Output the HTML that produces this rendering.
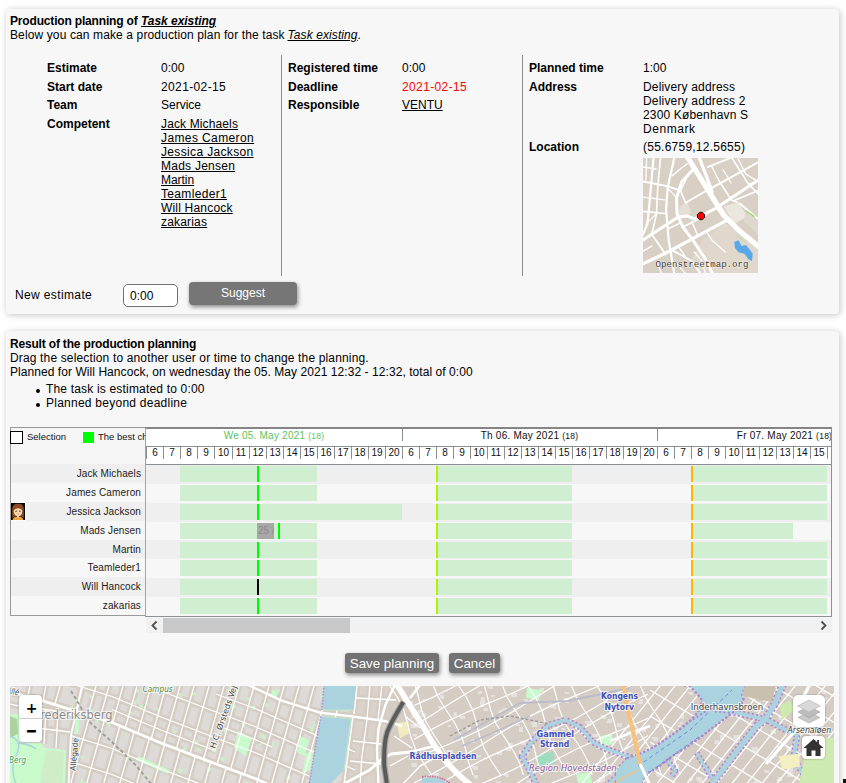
<!DOCTYPE html>
<html><head><meta charset="utf-8"><title>Production planning</title>
<style>
html,body{margin:0;padding:0;background:#fff;width:846px;height:783px;overflow:hidden;}
body{width:846px;height:783px;overflow:hidden;position:relative;font-family:"Liberation Sans",Arial,sans-serif;font-size:12px;line-height:14px;color:#000;}
.panel{position:absolute;background:#f7f7f7;border-radius:4px;box-shadow:1px 1px 7px rgba(0,0,0,.24);}
.t{position:absolute;white-space:nowrap;}
.b{font-weight:bold;}
a{color:#000;text-decoration:underline;}
.vl{position:absolute;width:1px;background:#8c8c8c;}
.btn{position:absolute;background:#727272;color:#fff;border-radius:4px;box-shadow:1px 2px 4px rgba(0,0,0,.45);text-align:center;white-space:nowrap;}
.g{position:absolute;}
.lbl{position:absolute;left:11px;width:130px;text-align:right;font-size:10px;letter-spacing:.12px;line-height:19px;height:19px;color:#1a1a1a;white-space:nowrap;}
.hr{position:absolute;font-size:10px;line-height:12px;text-align:center;color:#111;}
.sep{position:absolute;width:1px;background:#8a8f94;}
.bar{position:absolute;height:16px;background:#d0eed0;}
.now{position:absolute;width:2px;height:16px;}
#root{position:absolute;left:0;top:0;width:846px;height:783px;overflow:hidden;}
</style></head><body><div id="root">

<div class="panel" style="left:6px;top:9px;width:833px;height:305px;"></div>
<div class="t b" style="left:10px;top:14px;letter-spacing:-0.17px;">Production planning of</div>
<div class="t b" style="left:141px;top:14px;letter-spacing:-0.04px;"><a href="#"><i>Task existing</i></a></div>
<div class="t" style="left:10px;top:28px;letter-spacing:0.12px;">Below you can make a production plan for the task</div>
<div class="t" style="left:287.5px;top:28px;letter-spacing:0.09px;"><a href="#"><i>Task existing</i></a>.</div>
<div class="t b" style="left:47px;top:61px;">Estimate</div>
<div class="t b" style="left:47px;top:80px;">Start date</div>
<div class="t b" style="left:47px;top:98px;">Team</div>
<div class="t b" style="left:47px;top:117px;">Competent</div>
<div class="t" style="left:161px;top:61px;">0:00</div>
<div class="t" style="left:161px;top:80px;letter-spacing:0.37px;">2021-02-15</div>
<div class="t" style="left:161px;top:98px;">Service</div>
<div class="t" style="left:161px;top:117px;letter-spacing:0.13px;"><a href="#">Jack Michaels</a></div>
<div class="t" style="left:161px;top:131px;letter-spacing:0.39px;"><a href="#">James Cameron</a></div>
<div class="t" style="left:161px;top:145px;letter-spacing:0.35px;"><a href="#">Jessica Jackson</a></div>
<div class="t" style="left:161px;top:159px;letter-spacing:0.25px;"><a href="#">Mads Jensen</a></div>
<div class="t" style="left:161px;top:173px;letter-spacing:-0.04px;"><a href="#">Martin</a></div>
<div class="t" style="left:161px;top:187px;letter-spacing:0.34px;"><a href="#">Teamleder1</a></div>
<div class="t" style="left:161px;top:201px;letter-spacing:0.19px;"><a href="#">Will Hancock</a></div>
<div class="t" style="left:161px;top:215px;letter-spacing:0.18px;"><a href="#">zakarias</a></div>
<div class="vl" style="left:281px;top:55px;height:221px;"></div>
<div class="t b" style="left:288px;top:61px;">Registered time</div>
<div class="t b" style="left:288px;top:80px;">Deadline</div>
<div class="t b" style="left:288px;top:98px;">Responsible</div>
<div class="t" style="left:402px;top:61px;">0:00</div>
<div class="t" style="left:402px;top:80px;letter-spacing:0.37px;color:#ff0000;">2021-02-15</div>
<div class="t" style="left:402px;top:98px;"><a href="#">VENTU</a></div>
<div class="vl" style="left:522px;top:55px;height:221px;"></div>
<div class="t b" style="left:529px;top:61px;">Planned time</div>
<div class="t b" style="left:529px;top:80px;">Address</div>
<div class="t b" style="left:529px;top:140px;">Location</div>
<div class="t" style="left:643px;top:61px;">1:00</div>
<div class="t" style="left:643px;top:80px;letter-spacing:0.17px;">Delivery address</div>
<div class="t" style="left:643px;top:94px;letter-spacing:0.18px;">Delivery address 2</div>
<div class="t" style="left:643px;top:108px;letter-spacing:0.15px;">2300 København S</div>
<div class="t" style="left:643px;top:122px;letter-spacing:0.56px;">Denmark</div>
<div class="t" style="left:643px;top:140px;letter-spacing:0.24px;">(55.6759,12.5655)</div>
<svg class="g" style="left:643px;top:158px;" width="115" height="115" viewBox="0 0 115 115">
<clipPath id="mm"><rect width="115" height="115"/></clipPath><g clip-path="url(#mm)">
<rect width="115" height="115" fill="#d9d0c5"/>
<path d="M58.7 82.2 L82.2 64.6 L117.5 94.0 L117.5 117.5 L55.8 117.5 L48.5 102.8Z" fill="#e0d8cd"/>
<path d="M80.8 48.5 L95.5 44.1 L104.3 58.7 L91.1 66.1Z" fill="#ebe6de"/>
<path d="M36.7 48.5 L44.1 44.1 L48.5 54.3 L44.1 58.7 L35.2 58.7Z" fill="#e6dfd6"/>
<path d="M102.8 51.4 L115.0 64.6 L115.0 76.4 L101.3 63.2Z" fill="#dfd8ce"/>
<path d="M44.1 -1.5 L58.7 22.0 L73.4 45.5 L82.2 58.7 L95.5 72.0 L117.5 90.3" fill="none" stroke="#fff" stroke-width="5.2" stroke-linejoin="round" stroke-linecap="round"/>
<path d="M55.8 -1.5 L63.2 17.6 L69.0 33.8" fill="none" stroke="#fff" stroke-width="3.2" stroke-linejoin="round" stroke-linecap="round"/>
<path d="M51.4 10.3 L38.9 23.5 L33.5 39.7 L34.1 55.8 L39.9 69.0 L49.9 82.2 L61.7 99.9 L70.5 117.5" fill="none" stroke="#fff" stroke-width="3.0" stroke-linejoin="round" stroke-linecap="round"/>
<path d="M-1.5 83.0 L17.6 70.5 L35.2 59.0 L44.1 58.0 L51.4 60.9 L58.0 58.0 L73.4 49.9 L82.2 44.1 L117.5 20.6" fill="none" stroke="#fff" stroke-width="3.0" stroke-linejoin="round" stroke-linecap="round"/>
<path d="M-1.5 106.5 L22.0 95.5 L47.0 82.2 L63.2 73.4 L82.2 63.2" fill="none" stroke="#fff" stroke-width="3.2" stroke-linejoin="round" stroke-linecap="round"/>
<path d="M31.6 -1.5 L24.7 29.4 L23.1 51.4 L25.7 82.2 L31.6 117.5" fill="none" stroke="#fff" stroke-width="2.2" stroke-linejoin="round" stroke-linecap="round"/>
<path d="M10.6 -1.5 L6.6 44.1 L4.4 66.1 L-1.5 79.3" fill="none" stroke="#fff" stroke-width="2.2" stroke-linejoin="round" stroke-linecap="round"/>
<path d="M17.6 -1.5 L14.7 29.4 L13.5 55.8 L8.8 76.4" fill="none" stroke="#fff" stroke-width="1.6" stroke-linejoin="round" stroke-linecap="round"/>
<path d="M-1.5 23.2 L23.5 27.9 L37.5 32.6" fill="none" stroke="#fff" stroke-width="2.0" stroke-linejoin="round" stroke-linecap="round"/>
<path d="M-1.5 53.2 L22.0 55.5" fill="none" stroke="#fff" stroke-width="1.6" stroke-linejoin="round" stroke-linecap="round"/>
<path d="M-1.5 8.8 L13.2 11.0" fill="none" stroke="#fff" stroke-width="1.4" stroke-linejoin="round" stroke-linecap="round"/>
<path d="M64.6 9.1 L91.1 -1.5" fill="none" stroke="#fff" stroke-width="1.8" stroke-linejoin="round" stroke-linecap="round"/>
<path d="M68.3 30.1 L117.5 2.9" fill="none" stroke="#fff" stroke-width="2.0" stroke-linejoin="round" stroke-linecap="round"/>
<path d="M76.4 23.5 L88.9 42.6 L94.0 44.1" fill="none" stroke="#fff" stroke-width="1.6" stroke-linejoin="round" stroke-linecap="round"/>
<path d="M88.1 -1.5 L105.7 26.4 L117.5 38.2" fill="none" stroke="#fff" stroke-width="1.6" stroke-linejoin="round" stroke-linecap="round"/>
<path d="M91.1 42.6 L117.5 31.6" fill="none" stroke="#fff" stroke-width="1.6" stroke-linejoin="round" stroke-linecap="round"/>
<path d="M102.8 16.2 L117.5 25.0" fill="none" stroke="#fff" stroke-width="1.4" stroke-linejoin="round" stroke-linecap="round"/>
<path d="M96.9 45.5 L117.5 63.2" fill="none" stroke="#fff" stroke-width="2.0" stroke-linejoin="round" stroke-linecap="round"/>
<path d="M42.6 44.8 L61.7 33.8 L69.0 30.1" fill="none" stroke="#fff" stroke-width="1.8" stroke-linejoin="round" stroke-linecap="round"/>
<path d="M37.5 32.6 L42.6 44.8" fill="none" stroke="#fff" stroke-width="1.6" stroke-linejoin="round" stroke-linecap="round"/>
<path d="M44.1 19.1 L37.5 32.6" fill="none" stroke="#fff" stroke-width="1.4" stroke-linejoin="round" stroke-linecap="round"/>
<path d="M39.7 69.0 L63.2 57.3" fill="none" stroke="#fff" stroke-width="1.4" stroke-linejoin="round" stroke-linecap="round"/>
<path d="M48.5 63.2 L54.3 76.4" fill="none" stroke="#fff" stroke-width="1.4" stroke-linejoin="round" stroke-linecap="round"/>
<path d="M25.7 70.5 L38.2 64.6" fill="none" stroke="#fff" stroke-width="1.4" stroke-linejoin="round" stroke-linecap="round"/>
<path d="M8.8 76.4 L22.0 95.5" fill="none" stroke="#fff" stroke-width="1.6" stroke-linejoin="round" stroke-linecap="round"/>
<path d="M27.2 91.1 L48.5 102.8 L58.7 117.5" fill="none" stroke="#fff" stroke-width="1.8" stroke-linejoin="round" stroke-linecap="round"/>
<path d="M-1.5 94.0 L8.8 88.1" fill="none" stroke="#fff" stroke-width="1.4" stroke-linejoin="round" stroke-linecap="round"/>
<path d="M14.7 105.7 L19.1 117.5" fill="none" stroke="#fff" stroke-width="1.4" stroke-linejoin="round" stroke-linecap="round"/>
<path d="M35.2 88.1 L44.1 101.3" fill="none" stroke="#fff" stroke-width="1.4" stroke-linejoin="round" stroke-linecap="round"/>
<path d="M29.4 17.6 L38.2 10.3 L44.1 5.9" fill="none" stroke="#fff" stroke-width="1.4" stroke-linejoin="round" stroke-linecap="round"/>
<path d="M63.2 73.4 L69.0 82.2 L82.2 94.0" fill="none" stroke="#fff" stroke-width="1.2" stroke-linejoin="round" stroke-linecap="round"/>
<path d="M3.7 -1.5 L2.9 22.0" fill="none" stroke="#fff" stroke-width="1.3" stroke-linejoin="round" stroke-linecap="round"/>
<path d="M-1.5 38.9 L6.6 39.9 L22.0 41.9" fill="none" stroke="#fff" stroke-width="1.3" stroke-linejoin="round" stroke-linecap="round"/>
<path d="M24.2 29.4 L33.5 39.7" fill="none" stroke="#fff" stroke-width="1.2" stroke-linejoin="round" stroke-linecap="round"/>
<path d="M69.0 8.8 L76.4 23.5" fill="none" stroke="#fff" stroke-width="1.3" stroke-linejoin="round" stroke-linecap="round"/>
<path d="M94.0 -1.5 L102.8 16.2" fill="none" stroke="#fff" stroke-width="1.3" stroke-linejoin="round" stroke-linecap="round"/>
<path d="M105.7 26.4 L117.5 22.0" fill="none" stroke="#fff" stroke-width="1.3" stroke-linejoin="round" stroke-linecap="round"/>
<path d="M80.0 11.7 L88.1 25.0" fill="none" stroke="#fff" stroke-width="1.2" stroke-linejoin="round" stroke-linecap="round"/>
<path d="M2.9 66.1 L13.2 55.8" fill="none" stroke="#fff" stroke-width="1.2" stroke-linejoin="round" stroke-linecap="round"/>
<path d="M13.2 82.2 L19.1 91.1" fill="none" stroke="#fff" stroke-width="1.2" stroke-linejoin="round" stroke-linecap="round"/>
<path d="M73.4 49.9 L79.3 58.7" fill="none" stroke="#fff" stroke-width="1.2" stroke-linejoin="round" stroke-linecap="round"/>
<path d="M51.4 94.0 L58.7 102.8 L63.2 117.5" fill="none" stroke="#fff" stroke-width="1.3" stroke-linejoin="round" stroke-linecap="round"/>
<path d="M33.8 105.7 L44.1 117.5" fill="none" stroke="#fff" stroke-width="1.2" stroke-linejoin="round" stroke-linecap="round"/>
<path d="M91.3 84.0 L95.5 82.2 L98.7 88.1 L103.1 86.9 L109.7 95.5 L109.0 103.1 L105.7 101.6 L101.3 95.8 L95.5 94.3 L91.9 89.9Z" fill="#5aa7e8"/>
<path d="M94.0 77.8 L102.8 84.4" stroke="#b7e0a0" stroke-width="1" fill="none"/>
<path d="M102.8 52.9 L111.6 58.7" stroke="#a8d878" stroke-width="1.6" fill="none"/>
</g>
<text x="12.5" y="109.4" font-family="'Liberation Mono',monospace" font-size="9.1" fill="#3a3a3a" textLength="93" stroke="#fff" stroke-width="1.2" stroke-opacity=".6" paint-order="stroke">Openstreetmap.org</text>
<path d="M56.5 54.4H59.5L61.6 56.5V59.5L59.5 61.6H56.5L54.4 59.5V56.5Z" fill="#ff0000" stroke="#000" stroke-width=".9"/>
</svg>
<div class="t" style="left:15px;top:288px;letter-spacing:0.37px;">New estimate</div>
<div style="position:absolute;left:123px;top:284px;width:53px;height:21px;border:1px solid #707070;border-radius:5px;background:#fff;"></div>
<div class="t" style="left:130px;top:289px;">0:00</div>
<div class="btn" style="left:189px;top:282px;width:108px;height:22.5px;line-height:23px;font-size:12px;background:#767676;">Suggest</div>
<div class="panel" style="left:6px;top:331px;width:833px;height:470px;"></div>
<div class="t b" style="left:10px;top:337px;letter-spacing:-0.18px;">Result of the production planning</div>
<div class="t" style="left:10px;top:351px;letter-spacing:0.15px;">Drag the selection to another user or time to change the planning.</div>
<div class="t" style="left:10px;top:365px;letter-spacing:0.06px;">Planned for Will Hancock, on wednesday the 05. May 2021 12:32 - 12:32, total of 0:00</div>
<div style="position:absolute;left:36px;top:389px;width:4px;height:4px;border-radius:2px;background:#000;"></div>
<div style="position:absolute;left:36px;top:403px;width:4px;height:4px;border-radius:2px;background:#000;"></div>
<div class="t" style="left:46px;top:382px;letter-spacing:0.18px;">The task is estimated to 0:00</div>
<div class="t" style="left:46px;top:396px;letter-spacing:0.25px;">Planned beyond deadline</div>
<div class="g" style="left:10px;top:427px;width:136px;height:189px;border:1px solid #999;border-right:none;box-sizing:border-box;background:#f6f6f6;"></div>
<div class="g" style="left:145px;top:427px;width:687px;height:190px;box-sizing:border-box;border:1px solid #8c9196;border-left-color:#a4a4a4;border-top:2px solid #858585;background:#fff;"></div>
<div class="g" style="left:11px;top:464px;width:134px;height:19px;background:#efefef;"></div>
<div class="g" style="left:146px;top:465px;width:685px;height:19px;background:#efefef;"></div>
<div class="lbl" style="top:464px;">Jack Michaels</div>
<div class="g" style="left:11px;top:483px;width:134px;height:19px;background:#f7f7f7;"></div>
<div class="g" style="left:146px;top:484px;width:685px;height:19px;background:#f7f7f7;"></div>
<div class="lbl" style="top:483px;">James Cameron</div>
<div class="g" style="left:11px;top:502px;width:134px;height:19px;background:#efefef;"></div>
<div class="g" style="left:146px;top:503px;width:685px;height:19px;background:#efefef;"></div>
<div class="lbl" style="top:502px;">Jessica Jackson</div>
<div class="g" style="left:11px;top:521px;width:134px;height:19px;background:#f7f7f7;"></div>
<div class="g" style="left:146px;top:522px;width:685px;height:18px;background:#f7f7f7;"></div>
<div class="lbl" style="top:521px;">Mads Jensen</div>
<div class="g" style="left:11px;top:540px;width:134px;height:18px;background:#efefef;"></div>
<div class="g" style="left:146px;top:540px;width:685px;height:19px;background:#efefef;"></div>
<div class="lbl" style="top:540px;">Martin</div>
<div class="g" style="left:11px;top:558px;width:134px;height:19px;background:#f7f7f7;"></div>
<div class="g" style="left:146px;top:559px;width:685px;height:19px;background:#f7f7f7;"></div>
<div class="lbl" style="top:558px;">Teamleder1</div>
<div class="g" style="left:11px;top:577px;width:134px;height:19px;background:#efefef;"></div>
<div class="g" style="left:146px;top:578px;width:685px;height:19px;background:#efefef;"></div>
<div class="lbl" style="top:577px;">Will Hancock</div>
<div class="g" style="left:11px;top:596px;width:134px;height:19px;background:#f7f7f7;"></div>
<div class="g" style="left:146px;top:597px;width:685px;height:19px;background:#f7f7f7;"></div>
<div class="lbl" style="top:596px;">zakarias</div>
<div class="g" style="left:10px;top:431px;width:11px;height:11px;border:1px solid #000;background:#fff;"></div>
<div class="t" style="left:27px;top:431px;font-size:9.5px;line-height:12px;color:#111;">Selection</div>
<div class="g" style="left:83px;top:432px;width:11px;height:11px;background:#00ff00;"></div>
<div class="t" style="left:98px;top:431px;font-size:9.5px;line-height:12px;color:#111;width:47px;overflow:hidden;">The best choice</div>
<div class="g" style="left:146px;top:446px;width:685px;height:1px;background:#8a8f94;"></div>
<div class="g" style="left:146px;top:464px;width:685px;height:1px;background:#8a8f94;"></div>
<div class="g" style="left:146px;top:429px;width:685px;height:188px;overflow:hidden;">
<div class="hr" style="left:0px;top:0px;width:256px;color:#5cc45c;line-height:13px;letter-spacing:.23px;">We 05. May 2021 <span style="font-size:8.5px;">(18)</span></div>
<div class="sep" style="left:0px;top:18px;height:12px;"></div>
<div class="hr" style="left:1px;top:18px;width:16px;">6</div>
<div class="sep" style="left:17px;top:18px;height:12px;"></div>
<div class="hr" style="left:18px;top:18px;width:16px;">7</div>
<div class="sep" style="left:34px;top:18px;height:12px;"></div>
<div class="hr" style="left:35px;top:18px;width:16px;">8</div>
<div class="sep" style="left:51px;top:18px;height:12px;"></div>
<div class="hr" style="left:52px;top:18px;width:16px;">9</div>
<div class="sep" style="left:68px;top:18px;height:12px;"></div>
<div class="hr" style="left:69px;top:18px;width:17px;">10</div>
<div class="sep" style="left:86px;top:18px;height:12px;"></div>
<div class="hr" style="left:87px;top:18px;width:16px;">11</div>
<div class="sep" style="left:103px;top:18px;height:12px;"></div>
<div class="hr" style="left:104px;top:18px;width:16px;">12</div>
<div class="sep" style="left:120px;top:18px;height:12px;"></div>
<div class="hr" style="left:121px;top:18px;width:16px;">13</div>
<div class="sep" style="left:137px;top:18px;height:12px;"></div>
<div class="hr" style="left:138px;top:18px;width:16px;">14</div>
<div class="sep" style="left:154px;top:18px;height:12px;"></div>
<div class="hr" style="left:155px;top:18px;width:16px;">15</div>
<div class="sep" style="left:171px;top:18px;height:12px;"></div>
<div class="hr" style="left:172px;top:18px;width:16px;">16</div>
<div class="sep" style="left:188px;top:18px;height:12px;"></div>
<div class="hr" style="left:189px;top:18px;width:16px;">17</div>
<div class="sep" style="left:205px;top:18px;height:12px;"></div>
<div class="hr" style="left:206px;top:18px;width:16px;">18</div>
<div class="sep" style="left:222px;top:18px;height:12px;"></div>
<div class="hr" style="left:223px;top:18px;width:16px;">19</div>
<div class="sep" style="left:239px;top:18px;height:12px;"></div>
<div class="hr" style="left:240px;top:18px;width:16px;">20</div>
<div class="sep" style="left:256px;top:0px;height:12px;"></div>
<div class="hr" style="left:256px;top:0px;width:255px;color:#111;line-height:13px;letter-spacing:.23px;">Th 06. May 2021 <span style="font-size:8.5px;">(18)</span></div>
<div class="sep" style="left:256px;top:18px;height:12px;"></div>
<div class="hr" style="left:257px;top:18px;width:16px;">6</div>
<div class="sep" style="left:273px;top:18px;height:12px;"></div>
<div class="hr" style="left:274px;top:18px;width:16px;">7</div>
<div class="sep" style="left:290px;top:18px;height:12px;"></div>
<div class="hr" style="left:291px;top:18px;width:16px;">8</div>
<div class="sep" style="left:307px;top:18px;height:12px;"></div>
<div class="hr" style="left:308px;top:18px;width:16px;">9</div>
<div class="sep" style="left:324px;top:18px;height:12px;"></div>
<div class="hr" style="left:325px;top:18px;width:16px;">10</div>
<div class="sep" style="left:341px;top:18px;height:12px;"></div>
<div class="hr" style="left:342px;top:18px;width:16px;">11</div>
<div class="sep" style="left:358px;top:18px;height:12px;"></div>
<div class="hr" style="left:359px;top:18px;width:16px;">12</div>
<div class="sep" style="left:375px;top:18px;height:12px;"></div>
<div class="hr" style="left:376px;top:18px;width:16px;">13</div>
<div class="sep" style="left:392px;top:18px;height:12px;"></div>
<div class="hr" style="left:393px;top:18px;width:16px;">14</div>
<div class="sep" style="left:409px;top:18px;height:12px;"></div>
<div class="hr" style="left:410px;top:18px;width:16px;">15</div>
<div class="sep" style="left:426px;top:18px;height:12px;"></div>
<div class="hr" style="left:427px;top:18px;width:16px;">16</div>
<div class="sep" style="left:443px;top:18px;height:12px;"></div>
<div class="hr" style="left:444px;top:18px;width:16px;">17</div>
<div class="sep" style="left:460px;top:18px;height:12px;"></div>
<div class="hr" style="left:461px;top:18px;width:16px;">18</div>
<div class="sep" style="left:477px;top:18px;height:12px;"></div>
<div class="hr" style="left:478px;top:18px;width:16px;">19</div>
<div class="sep" style="left:494px;top:18px;height:12px;"></div>
<div class="hr" style="left:495px;top:18px;width:16px;">20</div>
<div class="sep" style="left:511px;top:0px;height:12px;"></div>
<div class="hr" style="left:511px;top:0px;width:255px;color:#111;line-height:13px;letter-spacing:.23px;">Fr 07. May 2021 <span style="font-size:8.5px;">(18)</span></div>
<div class="sep" style="left:511px;top:18px;height:12px;"></div>
<div class="hr" style="left:512px;top:18px;width:16px;">6</div>
<div class="sep" style="left:528px;top:18px;height:12px;"></div>
<div class="hr" style="left:529px;top:18px;width:16px;">7</div>
<div class="sep" style="left:545px;top:18px;height:12px;"></div>
<div class="hr" style="left:546px;top:18px;width:16px;">8</div>
<div class="sep" style="left:562px;top:18px;height:12px;"></div>
<div class="hr" style="left:563px;top:18px;width:16px;">9</div>
<div class="sep" style="left:579px;top:18px;height:12px;"></div>
<div class="hr" style="left:580px;top:18px;width:16px;">10</div>
<div class="sep" style="left:596px;top:18px;height:12px;"></div>
<div class="hr" style="left:597px;top:18px;width:16px;">11</div>
<div class="sep" style="left:613px;top:18px;height:12px;"></div>
<div class="hr" style="left:614px;top:18px;width:16px;">12</div>
<div class="sep" style="left:630px;top:18px;height:12px;"></div>
<div class="hr" style="left:631px;top:18px;width:16px;">13</div>
<div class="sep" style="left:647px;top:18px;height:12px;"></div>
<div class="hr" style="left:648px;top:18px;width:16px;">14</div>
<div class="sep" style="left:664px;top:18px;height:12px;"></div>
<div class="hr" style="left:665px;top:18px;width:16px;">15</div>
<div class="sep" style="left:681px;top:18px;height:12px;"></div>
<div class="hr" style="left:682px;top:18px;width:16px;">16</div>
<div class="sep" style="left:698px;top:18px;height:12px;"></div>
<div class="hr" style="left:699px;top:18px;width:16px;">17</div>
<div class="sep" style="left:715px;top:18px;height:12px;"></div>
<div class="hr" style="left:716px;top:18px;width:16px;">18</div>
<div class="sep" style="left:732px;top:18px;height:12px;"></div>
<div class="hr" style="left:733px;top:18px;width:16px;">19</div>
<div class="sep" style="left:749px;top:18px;height:12px;"></div>
<div class="hr" style="left:750px;top:18px;width:16px;">20</div>
<div class="bar" style="left:34px;top:37px;width:137px;"></div>
<div class="bar" style="left:290px;top:37px;width:136px;"></div>
<div class="bar" style="left:545px;top:37px;width:136px;"></div>
<div class="now" style="left:111px;top:37px;background:#00f800;"></div>
<div class="now" style="left:290px;top:37px;background:#b4f000;"></div>
<div class="now" style="left:545px;top:37px;background:#ffb400;"></div>
<div class="bar" style="left:34px;top:56px;width:137px;"></div>
<div class="bar" style="left:290px;top:56px;width:136px;"></div>
<div class="bar" style="left:545px;top:56px;width:136px;"></div>
<div class="now" style="left:111px;top:56px;background:#00f800;"></div>
<div class="now" style="left:290px;top:56px;background:#b4f000;"></div>
<div class="now" style="left:545px;top:56px;background:#ffb400;"></div>
<div class="bar" style="left:34px;top:75px;width:222px;"></div>
<div class="bar" style="left:290px;top:75px;width:136px;"></div>
<div class="bar" style="left:545px;top:75px;width:136px;"></div>
<div class="now" style="left:111px;top:75px;background:#00f800;"></div>
<div class="now" style="left:290px;top:75px;background:#b4f000;"></div>
<div class="now" style="left:545px;top:75px;background:#ffb400;"></div>
<div class="bar" style="left:34px;top:94px;width:137px;"></div>
<div class="bar" style="left:290px;top:94px;width:136px;"></div>
<div class="bar" style="left:545px;top:94px;width:102px;"></div>
<div class="g" style="left:111px;top:94px;width:17px;height:16px;background:#a8a8a8;color:#8a8a8a;font-size:10px;line-height:16px;overflow:hidden;white-space:nowrap;"><span style="margin-left:1px;">25 / 25</span></div>
<div class="now" style="left:132px;top:94px;background:#00f800;"></div>
<div class="now" style="left:290px;top:94px;background:#b4f000;"></div>
<div class="now" style="left:545px;top:94px;background:#ffb400;"></div>
<div class="bar" style="left:34px;top:113px;width:137px;"></div>
<div class="bar" style="left:290px;top:113px;width:136px;"></div>
<div class="bar" style="left:545px;top:113px;width:136px;"></div>
<div class="now" style="left:111px;top:113px;background:#00f800;"></div>
<div class="now" style="left:290px;top:113px;background:#b4f000;"></div>
<div class="now" style="left:545px;top:113px;background:#ffb400;"></div>
<div class="bar" style="left:34px;top:131px;width:137px;"></div>
<div class="bar" style="left:290px;top:131px;width:136px;"></div>
<div class="bar" style="left:545px;top:131px;width:136px;"></div>
<div class="now" style="left:111px;top:131px;background:#00f800;"></div>
<div class="now" style="left:290px;top:131px;background:#b4f000;"></div>
<div class="now" style="left:545px;top:131px;background:#ffb400;"></div>
<div class="bar" style="left:34px;top:150px;width:137px;"></div>
<div class="bar" style="left:290px;top:150px;width:136px;"></div>
<div class="bar" style="left:545px;top:150px;width:136px;"></div>
<div class="now" style="left:111px;top:150px;background:#000;"></div>
<div class="now" style="left:290px;top:150px;background:#b4f000;"></div>
<div class="now" style="left:545px;top:150px;background:#ffb400;"></div>
<div class="bar" style="left:34px;top:169px;width:137px;"></div>
<div class="bar" style="left:290px;top:169px;width:136px;"></div>
<div class="bar" style="left:545px;top:169px;width:136px;"></div>
<div class="now" style="left:111px;top:169px;background:#00f800;"></div>
<div class="now" style="left:290px;top:169px;background:#b4f000;"></div>
<div class="now" style="left:545px;top:169px;background:#ffb400;"></div>
</div>
<svg class="g" style="left:10px;top:502px;" width="16" height="19" viewBox="-1 -1 16 19"><rect x="0" y="-1" width="15" height="19" fill="#fbfbfb"/><rect width="14" height="17" fill="#050505"/><path d="M1.200 15V6Q1.200 0.800 7 0.800T12.800 6V15L10.500 13.500H3.500Z" fill="#8b4a22"/><ellipse cx="7" cy="8.600" rx="4.300" ry="4.700" fill="#f6d6ac"/><path d="M1.500 17Q2 14 5.500 13.700L7 14.500L8.500 13.700Q12 14 12.500 17Z" fill="#f2a23c"/><path d="M6 12.500h2v2.200h-2z" fill="#f3cfa2"/><path d="M2.400 7.200Q3 3.200 7 3.200T11.600 7.200Q9 5 7 5.200T2.400 7.200Z" fill="#8b4a22"/><circle cx="5.100" cy="8.300" r=".7" fill="#5a3020"/><circle cx="8.900" cy="8.300" r=".7" fill="#5a3020"/><path d="M6 10.900Q7 11.600 8 10.900" stroke="#e07070" stroke-width=".6" fill="none"/></svg>
<div class="g" style="left:146px;top:618px;width:686px;height:15px;background:#f1f1f1;"></div>
<div class="g" style="left:163px;top:618px;width:187px;height:15px;background:#c8c8c8;"></div>
<svg class="g" style="left:146px;top:618px;" width="17" height="15" viewBox="0 0 17 15"><path d="M10.5 3.5L6.5 7.5L10.5 11.5" fill="none" stroke="#505050" stroke-width="1.8"/></svg>
<svg class="g" style="left:815px;top:618px;" width="17" height="15" viewBox="0 0 17 15"><path d="M6.5 3.5L10.5 7.5L6.5 11.5" fill="none" stroke="#505050" stroke-width="1.8"/></svg>
<div class="btn" style="left:345px;top:653px;width:94px;height:20px;line-height:22px;font-size:13.33px;border-radius:3px;">Save planning</div>
<div class="btn" style="left:449px;top:653px;width:51px;height:20px;line-height:22px;font-size:13.33px;border-radius:3px;">Cancel</div>
<svg class="g" style="left:10px;top:686px;" width="824" height="97" viewBox="0 0 824 97" font-family="'DejaVu Sans Condensed','DejaVu Sans','Liberation Sans',sans-serif">
<clipPath id="mc"><rect width="824" height="97"/></clipPath>
<g clip-path="url(#mc)">
<rect width="824" height="97" fill="#dddad7"/>
<path d="M378 -1L824 -1L824 99L372 99Z" fill="#d5ccc3"/>
<path d="M340 -1L380 -1L372 99L332 99Z" fill="#dad3cc"/>
<path d="M-2.0 5.5 L32.0 14.6 L102.0 36.5 L151.0 57.0 L206.0 78.0 L245.0 92.5 L262.0 100.0" fill="none" stroke="#d5ccc3" stroke-width="7.8" stroke-linejoin="round"/>
<path d="M238.0 -1.0 L271.7 14.6 L310.7 26.8 L342.0 30.4 L376.0 35.3 L392.0 40.0" fill="none" stroke="#d5ccc3" stroke-width="7.4" stroke-linejoin="round"/>
<path d="M50.3 -1.0 L44.8 18.6" fill="none" stroke="#d5ccc3" stroke-width="6.3" stroke-linejoin="round"/>
<path d="M73.3 -1.0 L65.9 25.2" fill="none" stroke="#d5ccc3" stroke-width="6.3" stroke-linejoin="round"/>
<path d="M86.3 -1.0 L77.9 29.0" fill="none" stroke="#d5ccc3" stroke-width="6.3" stroke-linejoin="round"/>
<path d="M99.3 -1.0 L89.8 32.7" fill="none" stroke="#d5ccc3" stroke-width="6.3" stroke-linejoin="round"/>
<path d="M113.3 -1.0 L102.7 36.8" fill="none" stroke="#d5ccc3" stroke-width="6.3" stroke-linejoin="round"/>
<path d="M127.3 -1.0 L115.2 42.0" fill="none" stroke="#d5ccc3" stroke-width="6.3" stroke-linejoin="round"/>
<path d="M141.3 -1.0 L127.8 47.3" fill="none" stroke="#d5ccc3" stroke-width="6.3" stroke-linejoin="round"/>
<path d="M156.3 -1.0 L141.2 52.9" fill="none" stroke="#d5ccc3" stroke-width="6.3" stroke-linejoin="round"/>
<path d="M170.3 -1.0 L153.7 58.0" fill="none" stroke="#d5ccc3" stroke-width="6.3" stroke-linejoin="round"/>
<path d="M184.3 -1.0 L166.4 62.9" fill="none" stroke="#d5ccc3" stroke-width="6.3" stroke-linejoin="round"/>
<path d="M199.3 -1.0 L179.9 68.1" fill="none" stroke="#d5ccc3" stroke-width="6.3" stroke-linejoin="round"/>
<path d="M214.3 -1.0 L193.5 73.2" fill="none" stroke="#d5ccc3" stroke-width="6.3" stroke-linejoin="round"/>
<path d="M229.3 -1.0 L207.1 78.4" fill="none" stroke="#d5ccc3" stroke-width="6.3" stroke-linejoin="round"/>
<path d="M244.3 -1.0 L220.6 83.4" fill="none" stroke="#d5ccc3" stroke-width="6.3" stroke-linejoin="round"/>
<path d="M259.3 -1.0 L234.2 88.5" fill="none" stroke="#d5ccc3" stroke-width="6.3" stroke-linejoin="round"/>
<path d="M274.3 -1.0 L246.3 99.0" fill="none" stroke="#d5ccc3" stroke-width="6.3" stroke-linejoin="round"/>
<path d="M289.3 -1.0 L261.3 99.0" fill="none" stroke="#d5ccc3" stroke-width="6.3" stroke-linejoin="round"/>
<path d="M304.3 -1.0 L276.3 99.0" fill="none" stroke="#d5ccc3" stroke-width="6.3" stroke-linejoin="round"/>
<path d="M319.3 -1.0 L291.3 99.0" fill="none" stroke="#d5ccc3" stroke-width="6.3" stroke-linejoin="round"/>
<path d="M334.3 -1.0 L306.3 99.0" fill="none" stroke="#d5ccc3" stroke-width="6.3" stroke-linejoin="round"/>
<path d="M32.0 -11.4 L102.0 10.5 L151.0 31.0 L206.0 52.0 L245.0 66.5 L262.0 74.0 L345.0 110.0" fill="none" stroke="#d5ccc3" stroke-width="6.3" stroke-linejoin="round"/>
<path d="M102.0 -15.5 L151.0 5.0 L206.0 26.0 L245.0 40.5 L262.0 48.0 L345.0 84.0" fill="none" stroke="#d5ccc3" stroke-width="6.3" stroke-linejoin="round"/>
<path d="M102.0 23.5 L151.0 44.0 L206.0 65.0" fill="none" stroke="#d5ccc3" stroke-width="6.3" stroke-linejoin="round"/>
<path d="M206.0 39.0 L245.0 53.5 L262.0 61.0" fill="none" stroke="#d5ccc3" stroke-width="6.3" stroke-linejoin="round"/>
<path d="M206.0 8.0 L245.0 22.5 L262.0 30.0 L345.0 66.0" fill="none" stroke="#d5ccc3" stroke-width="6.3" stroke-linejoin="round"/>
<path d="M79.7 29.5 L60.3 99.0" fill="none" stroke="#d5ccc3" stroke-width="6.3" stroke-linejoin="round"/>
<path d="M94.4 34.1 L76.3 99.0" fill="none" stroke="#d5ccc3" stroke-width="6.3" stroke-linejoin="round"/>
<path d="M109.9 39.8 L93.3 99.0" fill="none" stroke="#d5ccc3" stroke-width="6.3" stroke-linejoin="round"/>
<path d="M124.2 45.8 L109.3 99.0" fill="none" stroke="#d5ccc3" stroke-width="6.3" stroke-linejoin="round"/>
<path d="M139.4 52.1 L126.3 99.0" fill="none" stroke="#d5ccc3" stroke-width="6.3" stroke-linejoin="round"/>
<path d="M154.6 58.4 L143.3 99.0" fill="none" stroke="#d5ccc3" stroke-width="6.3" stroke-linejoin="round"/>
<path d="M170.0 64.3 L160.3 99.0" fill="none" stroke="#d5ccc3" stroke-width="6.3" stroke-linejoin="round"/>
<path d="M185.4 70.1 L177.3 99.0" fill="none" stroke="#d5ccc3" stroke-width="6.3" stroke-linejoin="round"/>
<path d="M200.7 76.0 L194.3 99.0" fill="none" stroke="#d5ccc3" stroke-width="6.3" stroke-linejoin="round"/>
<path d="M216.1 81.8 L211.3 99.0" fill="none" stroke="#d5ccc3" stroke-width="6.3" stroke-linejoin="round"/>
<path d="M231.5 87.5 L228.3 99.0" fill="none" stroke="#d5ccc3" stroke-width="6.3" stroke-linejoin="round"/>
<path d="M60.0 49.4 L102.0 62.5 L151.0 83.0 L206.0 104.0 L245.0 118.5 L262.0 126.0" fill="none" stroke="#d5ccc3" stroke-width="6.3" stroke-linejoin="round"/>
<path d="M60.0 75.4 L102.0 88.5 L151.0 109.0 L206.0 130.0 L245.0 144.5 L262.0 152.0" fill="none" stroke="#d5ccc3" stroke-width="6.3" stroke-linejoin="round"/>
<path d="M58.5 99.0 L61.0 48.7 L67.0 24.0 L72.0 -1.0" fill="none" stroke="#d5ccc3" stroke-width="6.9" stroke-linejoin="round"/>
<path d="M-1.0 18.0 L20.0 22.0 L40.0 24.0 L66.0 30.0" fill="none" stroke="#d5ccc3" stroke-width="6.3" stroke-linejoin="round"/>
<path d="M22.0 21.0 L20.0 56.0" fill="none" stroke="#d5ccc3" stroke-width="6.3" stroke-linejoin="round"/>
<path d="M36.0 23.0 L34.0 58.0" fill="none" stroke="#d5ccc3" stroke-width="6.3" stroke-linejoin="round"/>
<path d="M48.0 26.0 L46.0 62.0" fill="none" stroke="#d5ccc3" stroke-width="6.3" stroke-linejoin="round"/>
<path d="M10.0 40.0 L60.0 46.0" fill="none" stroke="#d5ccc3" stroke-width="6.3" stroke-linejoin="round"/>
<path d="M20.0 -1.0 L18.0 10.0" fill="none" stroke="#d5ccc3" stroke-width="6.3" stroke-linejoin="round"/>
<path d="M36.0 -1.0 L33.0 15.0" fill="none" stroke="#d5ccc3" stroke-width="6.3" stroke-linejoin="round"/>
<path d="M343.0 30.0 L339.0 60.0 L334.0 99.0" fill="none" stroke="#d5ccc3" stroke-width="6.5" stroke-linejoin="round"/>
<path d="M347.0 -1.0 L344.0 28.0" fill="none" stroke="#d5ccc3" stroke-width="6.5" stroke-linejoin="round"/>
<path d="M360.0 -1.0 L357.0 33.0 L352.0 70.0 L350.0 99.0" fill="none" stroke="#d5ccc3" stroke-width="6.3" stroke-linejoin="round"/>
<path d="M372.0 -1.0 L368.0 34.0" fill="none" stroke="#d5ccc3" stroke-width="6.3" stroke-linejoin="round"/>
<path d="M343.0 55.0 L372.0 58.0" fill="none" stroke="#d5ccc3" stroke-width="6.3" stroke-linejoin="round"/>
<path d="M340.0 75.0 L371.0 78.0" fill="none" stroke="#d5ccc3" stroke-width="6.3" stroke-linejoin="round"/>
<path d="M346.0 12.0 L386.0 14.0" fill="none" stroke="#d5ccc3" stroke-width="6.3" stroke-linejoin="round"/>
<path d="M384.8 -1.0 L375.6 18.4 L368.5 42.6 L367.0 63.8 L368.5 99.0" fill="none" stroke="#d5ccc3" stroke-width="7.4" stroke-linejoin="round"/>
<path d="M328.0 101.0 L360.0 83.7 L372.8 72.3 L381.3 68.0 L400.0 66.0 L425.0 60.0" fill="none" stroke="#d5ccc3" stroke-width="7.8" stroke-linejoin="round"/>
<path d="M386.0 -3.0 L398.3 17.0 L411.0 36.9 L422.4 56.7 L436.6 76.6 L450.8 90.8 L462.0 100.0" fill="none" stroke="#d5ccc3" stroke-width="9.6" stroke-linejoin="round"/>
<path d="M392.0 -1.0 L410.0 -1.0 L400.0 12.0" fill="none" stroke="#d5ccc3" stroke-width="7.6" stroke-linejoin="round"/>
<path d="M395.0 30.0 L410.0 42.0" fill="none" stroke="#d5ccc3" stroke-width="6.3" stroke-linejoin="round"/>
<path d="M384.0 50.0 L402.0 62.0" fill="none" stroke="#d5ccc3" stroke-width="6.3" stroke-linejoin="round"/>
<path d="M380.0 80.0 L398.0 70.0" fill="none" stroke="#d5ccc3" stroke-width="6.3" stroke-linejoin="round"/>
<path d="M392.0 99.0 L410.0 80.0 L432.0 68.0" fill="none" stroke="#d5ccc3" stroke-width="6.5" stroke-linejoin="round"/>
<path d="M536 15h6v2h-5ZM554 6h5v2h-4ZM429 9h5v4h-3ZM494 61h7v4h-4ZM810 5h6v3h-3ZM449 30h6v3h-5ZM668 36h5v2h-3ZM487 66h5v3h-5ZM590 29h6v4h-4ZM641 51h7v4h-4ZM812 11h5v4h-3ZM605 4h6v4h-5ZM768 30h6v4h-5ZM592 81h7v3h-5ZM425 68h6v5h-5ZM520 37h6v2h-4ZM471 11h3v4h-3ZM504 38h6v2h-4ZM631 86h6v5h-4ZM574 35h7v5h-3ZM474 22h4v3h-5ZM510 0h5v3h-5ZM800 67h5v4h-5ZM423 87h6v5h-5ZM565 39h3v4h-3ZM428 20h4v3h-3ZM400 15h3v3h-3ZM767 60h4v3h-4ZM553 12h6v5h-4ZM603 8h3v3h-4ZM748 16h3v5h-5ZM462 53h3v4h-6ZM763 68h4v3h-4ZM724 52h6v3h-4ZM741 96h6v4h-5ZM711 22h5v3h-3ZM412 27h4v4h-6ZM588 91h7v5h-4ZM493 22h4v3h-5ZM778 82h5v4h-5ZM436 64h7v4h-5ZM601 17h6v3h-5ZM808 38h5v5h-5ZM471 12h4v5h-5ZM461 80h7v4h-4ZM630 13h3v5h-5ZM621 91h5v5h-5ZM489 24h4v3h-5ZM509 41h4v5h-4ZM592 57h7v3h-6ZM611 52h5v2h-4ZM477 0h6v3h-4ZM705 54h4v4h-5ZM729 10h5v3h-4ZM724 49h5v4h-6ZM586 59h5v4h-5ZM590 52h5v5h-5ZM768 91h4v4h-6ZM753 13h3v3h-3ZM501 7h6v4h-6ZM465 69h6v2h-6ZM806 21h7v3h-4ZM816 81h4v3h-5ZM542 19h4v4h-3ZM633 43h3v3h-5ZM615 6h7v4h-6ZM444 26h3v4h-4ZM454 41h7v4h-4ZM463 89h5v4h-3ZM424 67h5v2h-6ZM666 78h3v5h-3ZM762 44h4v4h-6ZM513 13h5v3h-3ZM468 5h4v3h-4ZM719 28h5v3h-4ZM408 24h3v4h-5ZM480 46h7v2h-5ZM582 48h6v3h-5ZM689 95h4v4h-5ZM667 39h4v2h-3ZM430 72h4v2h-3ZM753 84h6v3h-4ZM523 45h4v3h-4ZM804 94h5v3h-6ZM530 35h3v3h-4ZM611 19h5v2h-4ZM438 39h3v2h-4ZM498 57h5v4h-5ZM701 85h5v3h-6ZM463 70h6v2h-6ZM775 61h6v4h-3ZM620 49h6v4h-5ZM645 87h6v4h-4ZM413 13h4v2h-6ZM635 61h6v4h-4ZM401 77h6v4h-5ZM677 6h6v3h-3ZM512 71h4v4h-6ZM607 37h5v4h-5ZM659 62h3v2h-4ZM712 30h5v2h-3ZM513 65h6v4h-4ZM617 45h5v2h-6ZM484 95h7v2h-4ZM744 94h5v3h-4ZM797 20h5v2h-5ZM800 13h6v4h-6ZM695 22h7v3h-3ZM402 48h5v3h-3ZM544 31h6v2h-5ZM752 12h7v4h-6ZM522 36h5v5h-5ZM551 42h4v2h-3ZM751 28h7v3h-4ZM615 18h4v5h-6ZM741 61h7v5h-5ZM702 5h6v3h-5ZM671 28h3v5h-3ZM598 33h4v4h-6ZM509 64h4v4h-4ZM470 16h4v5h-4ZM492 88h7v3h-3ZM481 9h4v2h-4ZM509 55h7v4h-4ZM574 51h5v3h-3ZM517 94h4v4h-5ZM762 21h4v3h-4ZM587 93h6v5h-3ZM414 69h7v3h-5ZM400 38h7v4h-6ZM808 24h3v2h-5ZM686 91h6v4h-5ZM592 53h3v4h-4ZM786 63h4v2h-4ZM667 68h3v2h-5ZM645 38h4v4h-3ZM527 45h7v4h-6ZM600 23h4v5h-5ZM529 2h5v4h-4ZM508 65h7v3h-3ZM542 41h6v3h-5ZM710 49h4v5h-4ZM744 22h4v4h-4ZM800 48h4v3h-4ZM679 92h4v3h-4ZM809 14h3v2h-4ZM777 86h6v5h-6ZM538 18h7v4h-3ZM679 37h4v3h-4ZM401 27h4v5h-3Z" fill="#e4e1de"/>
<path d="M184 54l5 1l-1 3l-3 -1ZM222 18l4 1l-1 4l-4 -1ZM86 29l2 1l-1 4l-3 -1ZM72 95l5 1l-1 4l-3 -1ZM103 1l4 1l-1 2l-2 -1ZM127 3l3 1l-1 3l-4 -1ZM203 62l3 1l-1 4l-3 -1ZM136 97l5 1l-1 5l-3 -1ZM147 22l3 1l-1 2l-4 -1ZM170 82l3 1l-1 5l-4 -1ZM60 20l5 1l-1 3l-4 -1ZM169 7l4 1l-1 4l-3 -1ZM84 32l5 1l-1 4l-2 -1ZM128 10l2 1l-1 4l-2 -1ZM214 43l3 1l-1 4l-2 -1ZM237 11l3 1l-1 3l-3 -1ZM327 78l3 1l-1 5l-2 -1ZM168 83l4 1l-1 2l-4 -1ZM119 25l4 1l-1 3l-3 -1ZM80 9l4 1l-1 3l-3 -1ZM162 44l5 1l-1 3l-3 -1ZM298 18l2 1l-1 5l-4 -1ZM129 18l4 1l-1 5l-2 -1ZM321 86l4 1l-1 3l-2 -1ZM71 93l3 1l-1 4l-3 -1ZM287 58l3 1l-1 3l-3 -1ZM79 22l4 1l-1 5l-3 -1ZM137 89l3 1l-1 2l-3 -1ZM183 6l3 1l-1 3l-3 -1ZM96 35l5 1l-1 5l-3 -1ZM250 57l2 1l-1 2l-2 -1ZM310 68l5 1l-1 2l-3 -1ZM193 71l3 1l-1 5l-2 -1ZM210 71l5 1l-1 4l-3 -1ZM278 89l3 1l-1 4l-4 -1ZM300 40l4 1l-1 5l-3 -1ZM232 37l4 1l-1 4l-2 -1ZM236 96l5 1l-1 4l-3 -1ZM262 56l3 1l-1 5l-2 -1ZM266 3l4 1l-1 3l-2 -1ZM252 48l4 1l-1 5l-3 -1ZM63 29l4 1l-1 3l-2 -1ZM309 64l3 1l-1 5l-3 -1ZM243 19l3 1l-1 4l-4 -1ZM302 37l4 1l-1 3l-2 -1ZM197 81l5 1l-1 4l-4 -1ZM136 16l3 1l-1 3l-2 -1ZM174 61l3 1l-1 3l-4 -1ZM330 44l2 1l-1 2l-4 -1ZM71 69l4 1l-1 3l-4 -1ZM65 13l3 1l-1 2l-4 -1ZM125 14l2 1l-1 4l-3 -1ZM233 64l4 1l-1 5l-3 -1ZM115 46l3 1l-1 2l-3 -1ZM256 17l3 1l-1 3l-3 -1ZM203 60l4 1l-1 3l-4 -1ZM309 8l5 1l-1 4l-2 -1ZM185 61l5 1l-1 3l-3 -1ZM302 77l5 1l-1 3l-3 -1ZM116 70l4 1l-1 4l-3 -1Z" fill="#cdeec8"/>
<path d="M0 28L9 28L9 57L31 57L35 62L56 64L55 99L0 99Z" fill="#c8facc"/>
<path d="M0 30L7 33L8 48L0 52Z" fill="#add19e"/>
<path d="M0 50Q6 52 8 57T6 70T3 86T6 97M8 57Q20 58 26 63" fill="none" stroke="#aad3df" stroke-width="1.4"/>
<path d="M36 64L54 66L52 99L30 99Z" fill="#cfeec8"/>
<path d="M66 30L70 30L68 48L64 48Z M128 70L160 84L158 88L126 74Z M228 45L242 52L236 70L224 62Z M290 50L299 54L295 70L287 66Z M262 4L268 6L266 12L260 10Z M296 68L304 62L300 84L292 88Z" fill="#c8facc"/>
<path d="M517 2L531 4L529 14L516 12Z" fill="#c8facc"/><path d="M527 68L543 66L545 78L529 80Z" fill="#9fdcc0"/><path d="M590 50L602 48L603 58L591 60Z" fill="#c8facc"/><path d="M566 88L580 86L582 97L568 97Z" fill="#c8facc"/>
<path d="M387 37L398.3 35.5L399.7 46.800L389.8 52.500Z" fill="#f0ecc0"/>
<path d="M-2.0 5.5 L32.0 14.6 L102.0 36.5 L151.0 57.0 L206.0 78.0 L245.0 92.5 L262.0 100.0" fill="none" stroke="#ffffff" stroke-width="2.8" stroke-linejoin="round"/>
<path d="M238.0 -1.0 L271.7 14.6 L310.7 26.8 L342.0 30.4 L376.0 35.3 L392.0 40.0" fill="none" stroke="#ffffff" stroke-width="2.4" stroke-linejoin="round"/>
<path d="M50.3 -1.0 L44.8 18.6" fill="none" stroke="#ffffff" stroke-width="1.3" stroke-linejoin="round"/>
<path d="M73.3 -1.0 L65.9 25.2" fill="none" stroke="#ffffff" stroke-width="1.3" stroke-linejoin="round"/>
<path d="M86.3 -1.0 L77.9 29.0" fill="none" stroke="#ffffff" stroke-width="1.3" stroke-linejoin="round"/>
<path d="M99.3 -1.0 L89.8 32.7" fill="none" stroke="#ffffff" stroke-width="1.3" stroke-linejoin="round"/>
<path d="M113.3 -1.0 L102.7 36.8" fill="none" stroke="#ffffff" stroke-width="1.3" stroke-linejoin="round"/>
<path d="M127.3 -1.0 L115.2 42.0" fill="none" stroke="#ffffff" stroke-width="1.3" stroke-linejoin="round"/>
<path d="M141.3 -1.0 L127.8 47.3" fill="none" stroke="#ffffff" stroke-width="1.3" stroke-linejoin="round"/>
<path d="M156.3 -1.0 L141.2 52.9" fill="none" stroke="#ffffff" stroke-width="1.3" stroke-linejoin="round"/>
<path d="M170.3 -1.0 L153.7 58.0" fill="none" stroke="#ffffff" stroke-width="1.3" stroke-linejoin="round"/>
<path d="M184.3 -1.0 L166.4 62.9" fill="none" stroke="#ffffff" stroke-width="1.3" stroke-linejoin="round"/>
<path d="M199.3 -1.0 L179.9 68.1" fill="none" stroke="#ffffff" stroke-width="1.3" stroke-linejoin="round"/>
<path d="M214.3 -1.0 L193.5 73.2" fill="none" stroke="#ffffff" stroke-width="1.3" stroke-linejoin="round"/>
<path d="M229.3 -1.0 L207.1 78.4" fill="none" stroke="#ffffff" stroke-width="1.3" stroke-linejoin="round"/>
<path d="M244.3 -1.0 L220.6 83.4" fill="none" stroke="#ffffff" stroke-width="1.3" stroke-linejoin="round"/>
<path d="M259.3 -1.0 L234.2 88.5" fill="none" stroke="#ffffff" stroke-width="1.3" stroke-linejoin="round"/>
<path d="M274.3 -1.0 L246.3 99.0" fill="none" stroke="#ffffff" stroke-width="1.3" stroke-linejoin="round"/>
<path d="M289.3 -1.0 L261.3 99.0" fill="none" stroke="#ffffff" stroke-width="1.3" stroke-linejoin="round"/>
<path d="M304.3 -1.0 L276.3 99.0" fill="none" stroke="#ffffff" stroke-width="1.3" stroke-linejoin="round"/>
<path d="M319.3 -1.0 L291.3 99.0" fill="none" stroke="#ffffff" stroke-width="1.3" stroke-linejoin="round"/>
<path d="M334.3 -1.0 L306.3 99.0" fill="none" stroke="#ffffff" stroke-width="1.3" stroke-linejoin="round"/>
<path d="M32.0 -11.4 L102.0 10.5 L151.0 31.0 L206.0 52.0 L245.0 66.5 L262.0 74.0 L345.0 110.0" fill="none" stroke="#ffffff" stroke-width="1.3" stroke-linejoin="round"/>
<path d="M102.0 -15.5 L151.0 5.0 L206.0 26.0 L245.0 40.5 L262.0 48.0 L345.0 84.0" fill="none" stroke="#ffffff" stroke-width="1.3" stroke-linejoin="round"/>
<path d="M102.0 23.5 L151.0 44.0 L206.0 65.0" fill="none" stroke="#ffffff" stroke-width="1.3" stroke-linejoin="round"/>
<path d="M206.0 39.0 L245.0 53.5 L262.0 61.0" fill="none" stroke="#ffffff" stroke-width="1.3" stroke-linejoin="round"/>
<path d="M206.0 8.0 L245.0 22.5 L262.0 30.0 L345.0 66.0" fill="none" stroke="#ffffff" stroke-width="1.3" stroke-linejoin="round"/>
<path d="M79.7 29.5 L60.3 99.0" fill="none" stroke="#ffffff" stroke-width="1.3" stroke-linejoin="round"/>
<path d="M94.4 34.1 L76.3 99.0" fill="none" stroke="#ffffff" stroke-width="1.3" stroke-linejoin="round"/>
<path d="M109.9 39.8 L93.3 99.0" fill="none" stroke="#ffffff" stroke-width="1.3" stroke-linejoin="round"/>
<path d="M124.2 45.8 L109.3 99.0" fill="none" stroke="#ffffff" stroke-width="1.3" stroke-linejoin="round"/>
<path d="M139.4 52.1 L126.3 99.0" fill="none" stroke="#ffffff" stroke-width="1.3" stroke-linejoin="round"/>
<path d="M154.6 58.4 L143.3 99.0" fill="none" stroke="#ffffff" stroke-width="1.3" stroke-linejoin="round"/>
<path d="M170.0 64.3 L160.3 99.0" fill="none" stroke="#ffffff" stroke-width="1.3" stroke-linejoin="round"/>
<path d="M185.4 70.1 L177.3 99.0" fill="none" stroke="#ffffff" stroke-width="1.3" stroke-linejoin="round"/>
<path d="M200.7 76.0 L194.3 99.0" fill="none" stroke="#ffffff" stroke-width="1.3" stroke-linejoin="round"/>
<path d="M216.1 81.8 L211.3 99.0" fill="none" stroke="#ffffff" stroke-width="1.3" stroke-linejoin="round"/>
<path d="M231.5 87.5 L228.3 99.0" fill="none" stroke="#ffffff" stroke-width="1.3" stroke-linejoin="round"/>
<path d="M60.0 49.4 L102.0 62.5 L151.0 83.0 L206.0 104.0 L245.0 118.5 L262.0 126.0" fill="none" stroke="#ffffff" stroke-width="1.3" stroke-linejoin="round"/>
<path d="M60.0 75.4 L102.0 88.5 L151.0 109.0 L206.0 130.0 L245.0 144.5 L262.0 152.0" fill="none" stroke="#ffffff" stroke-width="1.3" stroke-linejoin="round"/>
<path d="M58.5 99.0 L61.0 48.7 L67.0 24.0 L72.0 -1.0" fill="none" stroke="#ffffff" stroke-width="1.9" stroke-linejoin="round"/>
<path d="M-1.0 18.0 L20.0 22.0 L40.0 24.0 L66.0 30.0" fill="none" stroke="#ffffff" stroke-width="1.3" stroke-linejoin="round"/>
<path d="M22.0 21.0 L20.0 56.0" fill="none" stroke="#ffffff" stroke-width="1.3" stroke-linejoin="round"/>
<path d="M36.0 23.0 L34.0 58.0" fill="none" stroke="#ffffff" stroke-width="1.3" stroke-linejoin="round"/>
<path d="M48.0 26.0 L46.0 62.0" fill="none" stroke="#ffffff" stroke-width="1.3" stroke-linejoin="round"/>
<path d="M10.0 40.0 L60.0 46.0" fill="none" stroke="#ffffff" stroke-width="1.3" stroke-linejoin="round"/>
<path d="M20.0 -1.0 L18.0 10.0" fill="none" stroke="#ffffff" stroke-width="1.3" stroke-linejoin="round"/>
<path d="M36.0 -1.0 L33.0 15.0" fill="none" stroke="#ffffff" stroke-width="1.3" stroke-linejoin="round"/>
<path d="M343.0 30.0 L339.0 60.0 L334.0 99.0" fill="none" stroke="#ffffff" stroke-width="1.5" stroke-linejoin="round"/>
<path d="M347.0 -1.0 L344.0 28.0" fill="none" stroke="#ffffff" stroke-width="1.5" stroke-linejoin="round"/>
<path d="M360.0 -1.0 L357.0 33.0 L352.0 70.0 L350.0 99.0" fill="none" stroke="#ffffff" stroke-width="1.3" stroke-linejoin="round"/>
<path d="M372.0 -1.0 L368.0 34.0" fill="none" stroke="#ffffff" stroke-width="1.3" stroke-linejoin="round"/>
<path d="M343.0 55.0 L372.0 58.0" fill="none" stroke="#ffffff" stroke-width="1.3" stroke-linejoin="round"/>
<path d="M340.0 75.0 L371.0 78.0" fill="none" stroke="#ffffff" stroke-width="1.3" stroke-linejoin="round"/>
<path d="M346.0 12.0 L386.0 14.0" fill="none" stroke="#ffffff" stroke-width="1.3" stroke-linejoin="round"/>
<path d="M384.8 -1.0 L375.6 18.4 L368.5 42.6 L367.0 63.8 L368.5 99.0" fill="none" stroke="#ffffff" stroke-width="2.4" stroke-linejoin="round"/>
<path d="M328.0 101.0 L360.0 83.7 L372.8 72.3 L381.3 68.0 L400.0 66.0 L425.0 60.0" fill="none" stroke="#ffffff" stroke-width="2.8" stroke-linejoin="round"/>
<path d="M386.0 -3.0 L398.3 17.0 L411.0 36.9 L422.4 56.7 L436.6 76.6 L450.8 90.8 L462.0 100.0" fill="none" stroke="#ffffff" stroke-width="5.6" stroke-linejoin="round"/>
<path d="M392.0 -1.0 L410.0 -1.0 L400.0 12.0" fill="none" stroke="#ffffff" stroke-width="2.6" stroke-linejoin="round"/>
<path d="M395.0 30.0 L410.0 42.0" fill="none" stroke="#ffffff" stroke-width="1.3" stroke-linejoin="round"/>
<path d="M384.0 50.0 L402.0 62.0" fill="none" stroke="#ffffff" stroke-width="1.3" stroke-linejoin="round"/>
<path d="M380.0 80.0 L398.0 70.0" fill="none" stroke="#ffffff" stroke-width="1.3" stroke-linejoin="round"/>
<path d="M392.0 99.0 L410.0 80.0 L432.0 68.0" fill="none" stroke="#ffffff" stroke-width="1.5" stroke-linejoin="round"/>
<path d="M404.0 19.5 L422.0 11.6 L440.0 2.7 L458.0 -7.3 L476.0 -18.3 L494.0 -29.7 L512.0 -40.8 L530.0 -51.0 L548.0 -60.2 L566.0 -68.3 L584.0 -75.7 L602.0 -83.2 L620.0 -91.2 L638.0 -100.3" fill="none" stroke="#ffffff" stroke-width="1.2" stroke-linejoin="round"/>
<path d="M404.0 39.8 L422.0 28.9 L440.0 17.6 L458.0 6.4 L476.0 -3.9 L494.0 -13.2 L512.0 -21.3 L530.0 -28.8 L548.0 -36.2 L566.0 -44.2 L584.0 -53.2 L602.0 -63.4 L620.0 -74.4 L638.0 -85.8" fill="none" stroke="#ffffff" stroke-width="1.2" stroke-linejoin="round"/>
<path d="M404.0 53.6 L422.0 43.2 L440.0 33.9 L458.0 25.7 L476.0 18.1 L494.0 10.8 L512.0 2.8 L530.0 -6.1 L548.0 -16.2 L566.0 -27.2 L584.0 -38.5 L602.0 -49.6 L620.0 -59.9 L638.0 -69.0" fill="none" stroke="#ffffff" stroke-width="1.2" stroke-linejoin="round"/>
<path d="M404.0 72.6 L422.0 65.1 L440.0 57.7 L458.0 49.8 L476.0 41.0 L494.0 31.0 L512.0 20.0 L530.0 8.7 L548.0 -2.4 L566.0 -12.7 L584.0 -21.9 L602.0 -30.1 L620.0 -37.5 L638.0 -44.9" fill="none" stroke="#ffffff" stroke-width="1.2" stroke-linejoin="round"/>
<path d="M404.0 96.8 L422.0 88.1 L440.0 78.1 L458.0 67.3 L476.0 55.9 L494.0 44.7 L512.0 34.4 L530.0 25.1 L548.0 16.9 L566.0 9.4 L584.0 2.0 L602.0 -5.9 L620.0 -14.9 L638.0 -25.0" fill="none" stroke="#ffffff" stroke-width="1.2" stroke-linejoin="round"/>
<path d="M404.0 114.5 L422.0 103.1 L440.0 91.9 L458.0 81.5 L476.0 72.1 L494.0 63.9 L512.0 56.4 L530.0 49.0 L548.0 41.1 L566.0 32.2 L584.0 22.1 L602.0 11.2 L620.0 -0.2 L638.0 -11.3" fill="none" stroke="#ffffff" stroke-width="1.2" stroke-linejoin="round"/>
<path d="M404.0 128.6 L422.0 119.2 L440.0 110.8 L458.0 103.3 L476.0 95.9 L494.0 88.1 L512.0 79.3 L530.0 69.3 L548.0 58.4 L566.0 47.0 L584.0 35.9 L602.0 25.5 L620.0 16.3 L638.0 8.2" fill="none" stroke="#ffffff" stroke-width="1.2" stroke-linejoin="round"/>
<path d="M404.0 150.2 L422.0 142.9 L440.0 135.1 L458.0 126.3 L476.0 116.5 L494.0 105.6 L512.0 94.3 L530.0 83.1 L548.0 72.7 L566.0 63.3 L584.0 55.1 L602.0 47.6 L620.0 40.2 L638.0 32.3" fill="none" stroke="#ffffff" stroke-width="1.2" stroke-linejoin="round"/>
<path d="M404.0 173.4 L422.0 163.6 L440.0 152.8 L458.0 141.5 L476.0 130.3 L494.0 119.8 L512.0 110.4 L530.0 102.1 L548.0 94.6 L566.0 87.2 L584.0 79.3 L602.0 70.5 L620.0 60.5 L638.0 49.5" fill="none" stroke="#ffffff" stroke-width="1.2" stroke-linejoin="round"/>
<path d="M404.0 188.7 L422.0 177.5 L440.0 166.9 L458.0 157.4 L476.0 149.1 L494.0 141.5 L512.0 134.1 L530.0 126.3 L548.0 117.5 L566.0 107.6 L584.0 96.7 L602.0 85.4 L620.0 74.2 L638.0 63.8" fill="none" stroke="#ffffff" stroke-width="1.2" stroke-linejoin="round"/>
<path d="M404.0 204.5 L422.0 196.0 L440.0 188.4 L458.0 181.1 L476.0 173.3 L494.0 164.6 L512.0 154.8 L530.0 144.0 L548.0 132.6 L566.0 121.4 L584.0 111.0 L602.0 101.6 L620.0 93.3 L638.0 85.8" fill="none" stroke="#ffffff" stroke-width="1.2" stroke-linejoin="round"/>
<path d="M404.0 228.0 L422.0 220.3 L440.0 211.7 L458.0 201.9 L476.0 191.2 L494.0 179.8 L512.0 168.6 L530.0 158.1 L548.0 148.6 L566.0 140.3 L584.0 132.8 L602.0 125.4 L620.0 117.5 L638.0 108.7" fill="none" stroke="#ffffff" stroke-width="1.2" stroke-linejoin="round"/>
<path d="M404.0 249.1 L422.0 238.4 L440.0 227.1 L458.0 215.8 L476.0 205.2 L494.0 195.7 L512.0 187.3 L530.0 179.7 L548.0 172.3 L566.0 164.5 L584.0 155.8 L602.0 145.9 L620.0 135.1 L638.0 123.8" fill="none" stroke="#ffffff" stroke-width="1.2" stroke-linejoin="round"/>
<path d="M404.0 263.0 L422.0 252.4 L440.0 242.7 L458.0 234.3 L476.0 226.6 L494.0 219.3 L512.0 211.5 L530.0 202.9 L548.0 193.1 L566.0 182.3 L584.0 171.0 L602.0 159.8 L620.0 149.3 L638.0 139.9" fill="none" stroke="#ffffff" stroke-width="1.2" stroke-linejoin="round"/>
<path d="M378.6 -2.0 L387.2 11.0 L393.7 24.0 L397.5 37.0 L400.6 50.0 L405.4 63.0 L412.9 76.0 L421.7 89.0" fill="none" stroke="#ffffff" stroke-width="1.2" stroke-linejoin="round"/>
<path d="M404.9 -2.0 L408.5 11.0 L411.6 24.0 L416.7 37.0 L424.5 50.0 L433.2 63.0 L440.2 76.0 L444.4 89.0" fill="none" stroke="#ffffff" stroke-width="1.2" stroke-linejoin="round"/>
<path d="M422.7 -2.0 L428.1 11.0 L436.1 24.0 L444.7 37.0 L451.4 50.0 L455.5 63.0 L458.5 76.0 L463.1 89.0" fill="none" stroke="#ffffff" stroke-width="1.2" stroke-linejoin="round"/>
<path d="M447.7 -2.0 L456.2 11.0 L462.7 24.0 L466.5 37.0 L469.5 50.0 L474.4 63.0 L482.0 76.0 L490.7 89.0" fill="none" stroke="#ffffff" stroke-width="1.2" stroke-linejoin="round"/>
<path d="M473.9 -2.0 L477.5 11.0 L480.6 24.0 L485.7 37.0 L493.6 50.0 L502.2 63.0 L509.2 76.0 L513.4 89.0" fill="none" stroke="#ffffff" stroke-width="1.2" stroke-linejoin="round"/>
<path d="M491.7 -2.0 L497.1 11.0 L505.1 24.0 L513.8 37.0 L520.4 50.0 L524.4 63.0 L527.4 76.0 L532.1 89.0" fill="none" stroke="#ffffff" stroke-width="1.2" stroke-linejoin="round"/>
<path d="M516.7 -2.0 L525.3 11.0 L531.7 24.0 L535.4 37.0 L538.5 50.0 L543.4 63.0 L551.0 76.0 L559.7 89.0" fill="none" stroke="#ffffff" stroke-width="1.2" stroke-linejoin="round"/>
<path d="M542.9 -2.0 L546.4 11.0 L549.6 24.0 L554.8 37.0 L562.6 50.0 L571.3 63.0 L578.2 76.0 L582.3 89.0" fill="none" stroke="#ffffff" stroke-width="1.2" stroke-linejoin="round"/>
<path d="M560.7 -2.0 L566.2 11.0 L574.2 24.0 L582.8 37.0 L589.4 50.0 L593.4 63.0 L596.4 76.0 L601.1 89.0" fill="none" stroke="#ffffff" stroke-width="1.2" stroke-linejoin="round"/>
<path d="M585.8 -2.0 L594.3 11.0 L600.6 24.0 L604.4 37.0 L607.4 50.0 L612.4 63.0 L620.1 76.0 L628.8 89.0" fill="none" stroke="#ffffff" stroke-width="1.2" stroke-linejoin="round"/>
<path d="M611.8 -2.0 L615.4 11.0 L618.5 24.0 L623.8 37.0 L631.7 50.0 L640.3 63.0 L647.2 76.0 L651.3 89.0" fill="none" stroke="#ffffff" stroke-width="1.2" stroke-linejoin="round"/>
<path d="M629.7 -2.0 L635.2 11.0 L643.2 24.0 L651.8 37.0 L658.4 50.0 L662.3 63.0 L665.3 76.0 L670.1 89.0" fill="none" stroke="#ffffff" stroke-width="1.2" stroke-linejoin="round"/>
<path d="M600.0 55.0 L618.0 48.0 L640.0 40.0" fill="none" stroke="#ffffff" stroke-width="2.6" stroke-linejoin="round"/>
<path d="M560.0 36.0 L575.0 50.0 L600.0 66.0 L622.0 74.0" fill="none" stroke="#ffffff" stroke-width="1.8" stroke-linejoin="round"/>
<path d="M651.6 -2.0 L570.0 100.0" fill="none" stroke="#ffffff" stroke-width="1.3" stroke-linejoin="round"/>
<path d="M666.6 -2.0 L585.0 100.0" fill="none" stroke="#ffffff" stroke-width="1.3" stroke-linejoin="round"/>
<path d="M681.6 -2.0 L600.0 100.0" fill="none" stroke="#ffffff" stroke-width="1.3" stroke-linejoin="round"/>
<path d="M696.6 -2.0 L615.0 100.0" fill="none" stroke="#ffffff" stroke-width="1.3" stroke-linejoin="round"/>
<path d="M711.6 -2.0 L630.0 100.0" fill="none" stroke="#ffffff" stroke-width="1.3" stroke-linejoin="round"/>
<path d="M726.6 -2.0 L645.0 100.0" fill="none" stroke="#ffffff" stroke-width="1.3" stroke-linejoin="round"/>
<path d="M741.6 -2.0 L660.0 100.0" fill="none" stroke="#ffffff" stroke-width="1.3" stroke-linejoin="round"/>
<path d="M756.6 -2.0 L675.0 100.0" fill="none" stroke="#ffffff" stroke-width="1.3" stroke-linejoin="round"/>
<path d="M771.6 -2.0 L690.0 100.0" fill="none" stroke="#ffffff" stroke-width="1.3" stroke-linejoin="round"/>
<path d="M786.6 -2.0 L705.0 100.0" fill="none" stroke="#ffffff" stroke-width="1.3" stroke-linejoin="round"/>
<path d="M801.6 -2.0 L720.0 100.0" fill="none" stroke="#ffffff" stroke-width="1.3" stroke-linejoin="round"/>
<path d="M816.6 -2.0 L735.0 100.0" fill="none" stroke="#ffffff" stroke-width="1.3" stroke-linejoin="round"/>
<path d="M831.6 -2.0 L750.0 100.0" fill="none" stroke="#ffffff" stroke-width="1.3" stroke-linejoin="round"/>
<path d="M846.6 -2.0 L765.0 100.0" fill="none" stroke="#ffffff" stroke-width="1.3" stroke-linejoin="round"/>
<path d="M861.6 -2.0 L780.0 100.0" fill="none" stroke="#ffffff" stroke-width="1.3" stroke-linejoin="round"/>
<path d="M876.6 -2.0 L795.0 100.0" fill="none" stroke="#ffffff" stroke-width="1.3" stroke-linejoin="round"/>
<path d="M891.6 -2.0 L810.0 100.0" fill="none" stroke="#ffffff" stroke-width="1.3" stroke-linejoin="round"/>
<path d="M640.0 -256.0 L830.0 -142.0" fill="none" stroke="#ffffff" stroke-width="1.3" stroke-linejoin="round"/>
<path d="M640.0 -230.0 L830.0 -116.0" fill="none" stroke="#ffffff" stroke-width="1.3" stroke-linejoin="round"/>
<path d="M640.0 -204.0 L830.0 -90.0" fill="none" stroke="#ffffff" stroke-width="1.3" stroke-linejoin="round"/>
<path d="M640.0 -178.0 L830.0 -64.0" fill="none" stroke="#ffffff" stroke-width="1.3" stroke-linejoin="round"/>
<path d="M640.0 -152.0 L830.0 -38.0" fill="none" stroke="#ffffff" stroke-width="1.3" stroke-linejoin="round"/>
<path d="M640.0 -126.0 L830.0 -12.0" fill="none" stroke="#ffffff" stroke-width="1.3" stroke-linejoin="round"/>
<path d="M640.0 -100.0 L830.0 14.0" fill="none" stroke="#ffffff" stroke-width="1.3" stroke-linejoin="round"/>
<path d="M640.0 -74.0 L830.0 40.0" fill="none" stroke="#ffffff" stroke-width="1.3" stroke-linejoin="round"/>
<path d="M640.0 -48.0 L830.0 66.0" fill="none" stroke="#ffffff" stroke-width="1.3" stroke-linejoin="round"/>
<path d="M640.0 -22.0 L830.0 92.0" fill="none" stroke="#ffffff" stroke-width="1.3" stroke-linejoin="round"/>
<path d="M640.0 4.0 L830.0 118.0" fill="none" stroke="#ffffff" stroke-width="1.3" stroke-linejoin="round"/>
<path d="M640.0 30.0 L830.0 144.0" fill="none" stroke="#ffffff" stroke-width="1.3" stroke-linejoin="round"/>
<path d="M640.0 56.0 L830.0 170.0" fill="none" stroke="#ffffff" stroke-width="1.3" stroke-linejoin="round"/>
<path d="M640.0 82.0 L830.0 196.0" fill="none" stroke="#ffffff" stroke-width="1.3" stroke-linejoin="round"/>
<path d="M640.0 108.0 L830.0 222.0" fill="none" stroke="#ffffff" stroke-width="1.3" stroke-linejoin="round"/>
<path d="M640.0 134.0 L830.0 248.0" fill="none" stroke="#ffffff" stroke-width="1.3" stroke-linejoin="round"/>
<path d="M640.0 160.0 L830.0 274.0" fill="none" stroke="#ffffff" stroke-width="1.3" stroke-linejoin="round"/>
<path d="M640.0 186.0 L830.0 300.0" fill="none" stroke="#ffffff" stroke-width="1.3" stroke-linejoin="round"/>
<path d="M640.0 212.0 L830.0 326.0" fill="none" stroke="#ffffff" stroke-width="1.3" stroke-linejoin="round"/>
<path d="M640.0 238.0 L830.0 352.0" fill="none" stroke="#ffffff" stroke-width="1.3" stroke-linejoin="round"/>
<path d="M640.0 264.0 L830.0 378.0" fill="none" stroke="#ffffff" stroke-width="1.3" stroke-linejoin="round"/>
<path d="M640.0 290.0 L830.0 404.0" fill="none" stroke="#ffffff" stroke-width="1.3" stroke-linejoin="round"/>
<path d="M640.0 316.0 L830.0 430.0" fill="none" stroke="#ffffff" stroke-width="1.3" stroke-linejoin="round"/>
<path d="M640.0 342.0 L830.0 456.0" fill="none" stroke="#ffffff" stroke-width="1.3" stroke-linejoin="round"/>
<path d="M444 54L492 27L510 17L558 15L620 2" fill="none" stroke="#b9bccb" stroke-width="1.8"/>
<path d="M452 60L480 48L520 30" fill="none" stroke="#b9bccb" stroke-width="1.5"/>
<path d="M61 5L80 36.5L102 56L126.6 80L142 99" fill="none" stroke="#9c9c9c" stroke-width="1.8" stroke-dasharray="3.5 2.5"/>
<path d="M440 50L470 34L500 30L540 38" fill="none" stroke="#9a9a9a" stroke-width="1.4" stroke-dasharray="3 2"/>
<path d="M314 -1L346 -1L343.5 24L312 24Z" fill="#aad3df"/>
<path d="M310.7 30.4L341 33L334 84L321 97L299 99Z" fill="#aad3df"/>
<path d="M314 -1L312 24M310.7 30.4L299 99" fill="none" stroke="#b088cf" stroke-width="1.4" stroke-dasharray="1.5 1.5"/>
<path d="M312 24L343 24M311 30L341 33M341 33L334 84" fill="none" stroke="#bfe8c8" stroke-width="1"/>
<path d="M393.3 16C388 25 380 38 377 46.800S374 70 374.2 79.400T377 99" fill="none" stroke="#a6a6a6" stroke-width="6.4"/>
<path d="M393.3 16C388 25 380 38 377 46.800S374 70 374.2 79.400T377 99" fill="none" stroke="#5a5a5a" stroke-width="4"/>
<path d="M412 92Q430 90 440 99L412 99Z" fill="#aad3df"/><path d="M412 91Q430 88 442 99" fill="none" stroke="#c07090" stroke-width="1.8" stroke-dasharray="1.5 1"/>
<path d="M618.0 72.0 L633.0 66.5 L644.0 61.0 L658.0 52.0 L671.0 42.5 L680.0 35.0 L687.0 27.5 L691.0 21.0 L692.0 14.0 L688.0 8.5 L677.0 -3.0 L737.0 -3.0 L732.0 8.5 L733.5 14.0 L729.0 21.0 L722.0 27.0 L713.6 33.3 L702.3 41.8 L692.4 49.6 L682.5 56.7 L676.8 61.0 L667.0 66.7 L657.0 73.8 L648.4 80.9 L638.5 86.5 L634.0 92.0 L630.0 101.0 L606.0 101.0 L606.0 84.0Z" stroke-width="2.6" fill="none" stroke="#b088cf" stroke-linecap="round" stroke-dasharray="0.1 4.2" stroke-linejoin="round"/>
<path d="M526.4 99.0 L519.0 82.8 L511.8 70.6 L521.6 56.0 L538.6 39.0 L555.7 34.0 L570.3 41.4 L582.4 56.0 L597.0 63.3 L622.0 72.0" stroke-width="6.6" fill="none" stroke="#b088cf" stroke-dasharray="2.2 2.2" stroke-linejoin="round"/>
<path d="M724.0 26.0 L745.0 31.0 L757.0 34.0 L774.0 43.0 L787.0 49.0" stroke-width="7.0" fill="none" stroke="#b088cf" stroke-dasharray="2.2 2.2" stroke-linejoin="round"/>
<path d="M773.0 -2.0 L764.0 19.0 L755.0 34.0 L747.0 39.6 L729.0 62.0 L705.0 94.0 L701.0 100.0" stroke-width="8.2" fill="none" stroke="#b088cf" stroke-dasharray="2.2 2.2" stroke-linejoin="round"/>
<path d="M686.7 66.7 L692.4 76.6 L698.0 85.0 L702.0 93.0" stroke-width="6.0" fill="none" stroke="#b088cf" stroke-dasharray="2.2 2.2" stroke-linejoin="round"/>
<path d="M657.0 73.8 L665.5 85.0 L661.0 91.0" stroke-width="6.0" fill="none" stroke="#b088cf" stroke-dasharray="2.2 2.2" stroke-linejoin="round"/>
<path d="M787.0 49.0 L783.6 73.0 L793.3 87.7 L826.0 80.4" stroke-width="6.800000000000001" fill="none" stroke="#b088cf" stroke-dasharray="2.2 2.2" stroke-linejoin="round"/>
<path d="M596.0 100.0 L608.0 90.0 L620.0 82.0" stroke-width="6.6" fill="none" stroke="#b088cf" stroke-dasharray="2.2 2.2" stroke-linejoin="round"/>
<path d="M677.0 -2.0 L660.0 -8.0" stroke-width="6.2" fill="none" stroke="#b088cf" stroke-dasharray="2.2 2.2" stroke-linejoin="round"/>
<path d="M618.0 72.0 L633.0 66.5 L644.0 61.0 L658.0 52.0 L671.0 42.5 L680.0 35.0 L687.0 27.5 L691.0 21.0 L692.0 14.0 L688.0 8.5 L677.0 -3.0 L737.0 -3.0 L732.0 8.5 L733.5 14.0 L729.0 21.0 L722.0 27.0 L713.6 33.3 L702.3 41.8 L692.4 49.6 L682.5 56.7 L676.8 61.0 L667.0 66.7 L657.0 73.8 L648.4 80.9 L638.5 86.5 L634.0 92.0 L630.0 101.0 L606.0 101.0 L606.0 84.0Z" fill="#aad3df"/>
<path d="M526.4 99.0 L519.0 82.8 L511.8 70.6 L521.6 56.0 L538.6 39.0 L555.7 34.0 L570.3 41.4 L582.4 56.0 L597.0 63.3 L622.0 72.0" fill="none" stroke="#aad3df" stroke-width="3.4" stroke-linejoin="round"/>
<path d="M724.0 26.0 L745.0 31.0 L757.0 34.0 L774.0 43.0 L787.0 49.0" fill="none" stroke="#aad3df" stroke-width="3.8" stroke-linejoin="round"/>
<path d="M773.0 -2.0 L764.0 19.0 L755.0 34.0 L747.0 39.6 L729.0 62.0 L705.0 94.0 L701.0 100.0" fill="none" stroke="#aad3df" stroke-width="5" stroke-linejoin="round"/>
<path d="M686.7 66.7 L692.4 76.6 L698.0 85.0 L702.0 93.0" fill="none" stroke="#aad3df" stroke-width="2.8" stroke-linejoin="round"/>
<path d="M657.0 73.8 L665.5 85.0 L661.0 91.0" fill="none" stroke="#aad3df" stroke-width="2.8" stroke-linejoin="round"/>
<path d="M787.0 49.0 L783.6 73.0 L793.3 87.7 L826.0 80.4" fill="none" stroke="#aad3df" stroke-width="3.6" stroke-linejoin="round"/>
<path d="M596.0 100.0 L608.0 90.0 L620.0 82.0" fill="none" stroke="#aad3df" stroke-width="3.4" stroke-linejoin="round"/>
<path d="M677.0 -2.0 L660.0 -8.0" fill="none" stroke="#aad3df" stroke-width="3" stroke-linejoin="round"/>
<path d="M618.0 72.0 L633.0 66.5 L644.0 61.0 L658.0 52.0 L671.0 42.5 L680.0 35.0 L687.0 27.5 L691.0 21.0 L692.0 14.0 L688.0 8.5 L677.0 -3.0" stroke-width="2.4" fill="none" stroke="#b088cf" stroke-linecap="round" stroke-dasharray="0.1 4.2" stroke-linejoin="round"/>
<path d="M737.0 -3.0 L732.0 8.5 L733.5 14.0 L729.0 21.0 L722.0 27.0 L713.6 33.3 L702.3 41.8 L692.4 49.6 L682.5 56.7 L676.8 61.0 L667.0 66.7 L657.0 73.8 L648.4 80.9 L638.5 86.5 L634.0 92.0" stroke-width="2.4" fill="none" stroke="#b088cf" stroke-linecap="round" stroke-dasharray="0.1 4.2" stroke-linejoin="round"/>
<path d="M680 35L688.6 30L699.3 22.7L705 25.5L722 27" stroke-width="2.2" fill="none" stroke="#b088cf" stroke-linecap="round" stroke-dasharray="0.1 4.2" stroke-linejoin="round"/>
<path d="M628 80L680 44L722 4M640 86L690 50" fill="none" stroke="#7585e0" stroke-width="1" stroke-dasharray="4 3"/>
<path d="M735 -1L766 -1L762 16L732 10Z" fill="#c9c0b0"/>
<path d="M794 73L814 71.6L814 52L824 52L824 99L789 99Z" fill="#cdebb0"/><path d="M770 20L780 14L784 24L772 34Z" fill="#cdebb0"/><path d="M769 70L789 67.7L790 80.8L772 83.5Z" fill="#f3efc0"/>
<path d="M756 78L771.8 59.8L786 44L795.5 7L799.4 -1" fill="none" stroke="#fff" stroke-width="3.2" stroke-linejoin="round"/>
<path d="M613 -2L618 24L624 50L630 78" fill="none" stroke="#f9c17a" stroke-width="4"/>
<path d="M630 78L640 99" fill="none" stroke="#fff" stroke-width="3"/>
<path d="M600 99L628 84" fill="none" stroke="#f9c17a" stroke-width="2.4" stroke-dasharray="2 1.5"/>
</g>
<text x="24.5" y="33" font-size="12" fill="#8a8a8a" textLength="78" lengthAdjust="spacingAndGlyphs" stroke="#fff" stroke-width="2" stroke-opacity=".7" paint-order="stroke" >Frederiksberg</text>
<text x="-3" y="8" font-size="8.5" fill="#555" textLength="13" lengthAdjust="spacingAndGlyphs" font-style="italic" transform="rotate(8)" stroke="#fff" stroke-width="2" stroke-opacity=".7" paint-order="stroke" >Allé</text>
<text x="132.7" y="6" font-size="8" fill="#5a8a3a" textLength="30" lengthAdjust="spacingAndGlyphs" font-style="italic" stroke="#fff" stroke-width="2" stroke-opacity=".7" paint-order="stroke" >Campus</text>
<text x="-1" y="76.7" font-size="9" fill="#3a9a4a" textLength="17" lengthAdjust="spacingAndGlyphs" font-style="italic" stroke="#fff" stroke-width="2" stroke-opacity=".7" paint-order="stroke" >Berg</text>
<text x="0" y="0" font-size="8" fill="#444" textLength="33" lengthAdjust="spacingAndGlyphs" transform="translate(65.5,85) rotate(-85)" stroke="#fff" stroke-width="2" stroke-opacity=".7" paint-order="stroke" >Allégade</text>
<text x="0" y="0" font-size="8" fill="#444" textLength="66" lengthAdjust="spacingAndGlyphs" transform="translate(205,63) rotate(-70.5)" stroke="#fff" stroke-width="2" stroke-opacity=".7" paint-order="stroke" >H.C. Ørsteds Vej</text>
<text x="399.6" y="73" font-size="9" fill="#4050b8" textLength="67" lengthAdjust="spacingAndGlyphs" font-weight="bold" stroke="#fff" stroke-width="2" stroke-opacity=".7" paint-order="stroke" >Rådhuspladsen</text>
<text x="591" y="13.4" font-size="9" fill="#4050b8" textLength="37" lengthAdjust="spacingAndGlyphs" font-weight="bold" stroke="#fff" stroke-width="2" stroke-opacity=".7" paint-order="stroke" >Kongens</text>
<text x="594.6" y="24" font-size="9" fill="#4050b8" textLength="29.4" lengthAdjust="spacingAndGlyphs" font-weight="bold" stroke="#fff" stroke-width="2" stroke-opacity=".7" paint-order="stroke" >Nytorv</text>
<text x="526.4" y="51" font-size="9" fill="#4050b8" textLength="37.8" lengthAdjust="spacingAndGlyphs" font-weight="bold" stroke="#fff" stroke-width="2" stroke-opacity=".7" paint-order="stroke" >Gammel</text>
<text x="530" y="61.4" font-size="9" fill="#4050b8" textLength="29.3" lengthAdjust="spacingAndGlyphs" font-weight="bold" stroke="#fff" stroke-width="2" stroke-opacity=".7" paint-order="stroke" >Strand</text>
<text x="519" y="85" font-size="9" fill="#8a5a9a" textLength="87.7" lengthAdjust="spacingAndGlyphs" font-style="italic" stroke="#fff" stroke-width="2" stroke-opacity=".7" paint-order="stroke" >Region Hovedstaden</text>
<text x="680.8" y="24" font-size="9" fill="#444" textLength="72.3" lengthAdjust="spacingAndGlyphs" stroke="#fff" stroke-width="2" stroke-opacity=".7" paint-order="stroke" >Inderhavnsbroen</text>
<text x="777.5" y="46.7" font-size="8.8" fill="#444" textLength="43.8" lengthAdjust="spacingAndGlyphs" font-style="italic" stroke="#fff" stroke-width="2" stroke-opacity=".7" paint-order="stroke" >Arsenaløen</text>
</svg>
<div class="g" style="left:19px;top:695px;width:23px;height:47px;background:#fff;border-radius:4px;box-shadow:0 0 2px rgba(0,0,0,.4);"></div>
<div class="g" style="left:19px;top:718px;width:23px;height:1px;background:#ccc;"></div>
<div class="g" style="left:20px;top:697px;width:23px;height:23px;line-height:23px;text-align:center;font-weight:bold;font-size:14px;font-family:'DejaVu Sans','Liberation Sans',sans-serif;">+</div>
<div class="g" style="left:20px;top:719px;width:23px;height:23px;line-height:22px;text-align:center;font-weight:bold;font-size:14px;text-shadow:0 .6px 0 #000;font-family:'DejaVu Sans','Liberation Sans',sans-serif;">−</div>
<div class="g" style="left:793px;top:695px;width:32px;height:32px;background:#fff;border-radius:5px;box-shadow:0 0 2px rgba(0,0,0,.4);"></div>
<svg class="g" style="left:793px;top:695px;" width="32" height="32" viewBox="0 0 32 32"><path d="M16 17L5 22.5L16 28L27 22.5Z" fill="#c8c8c8" stroke="#aaa" stroke-width=".6"/><path d="M16 11.5L5 17L16 22.5L27 17Z" fill="#bdbdbd" stroke="#9a9a9a" stroke-width=".6"/><path d="M16 5L4.5 11L16 17L27.5 11Z" fill="#d8d8d8" stroke="#b0b0b0" stroke-width=".6"/></svg>
<div class="g" style="left:802px;top:736px;width:23px;height:23px;background:#fff;border-radius:4px;box-shadow:0 0 2px rgba(0,0,0,.4);"></div>
<svg class="g" style="left:802px;top:736px;" width="23" height="23" viewBox="0 0 23 23"><path d="M11.5 3L1.5 12H4.5V20H9.5V14.5H13.5V20H18.5V12H21.5L17 8V4H15.2V6.3Z" fill="#333"/></svg>
<div class="g" style="left:843px;top:779px;width:3px;height:4px;background:#111;"></div>
</div></body></html>
